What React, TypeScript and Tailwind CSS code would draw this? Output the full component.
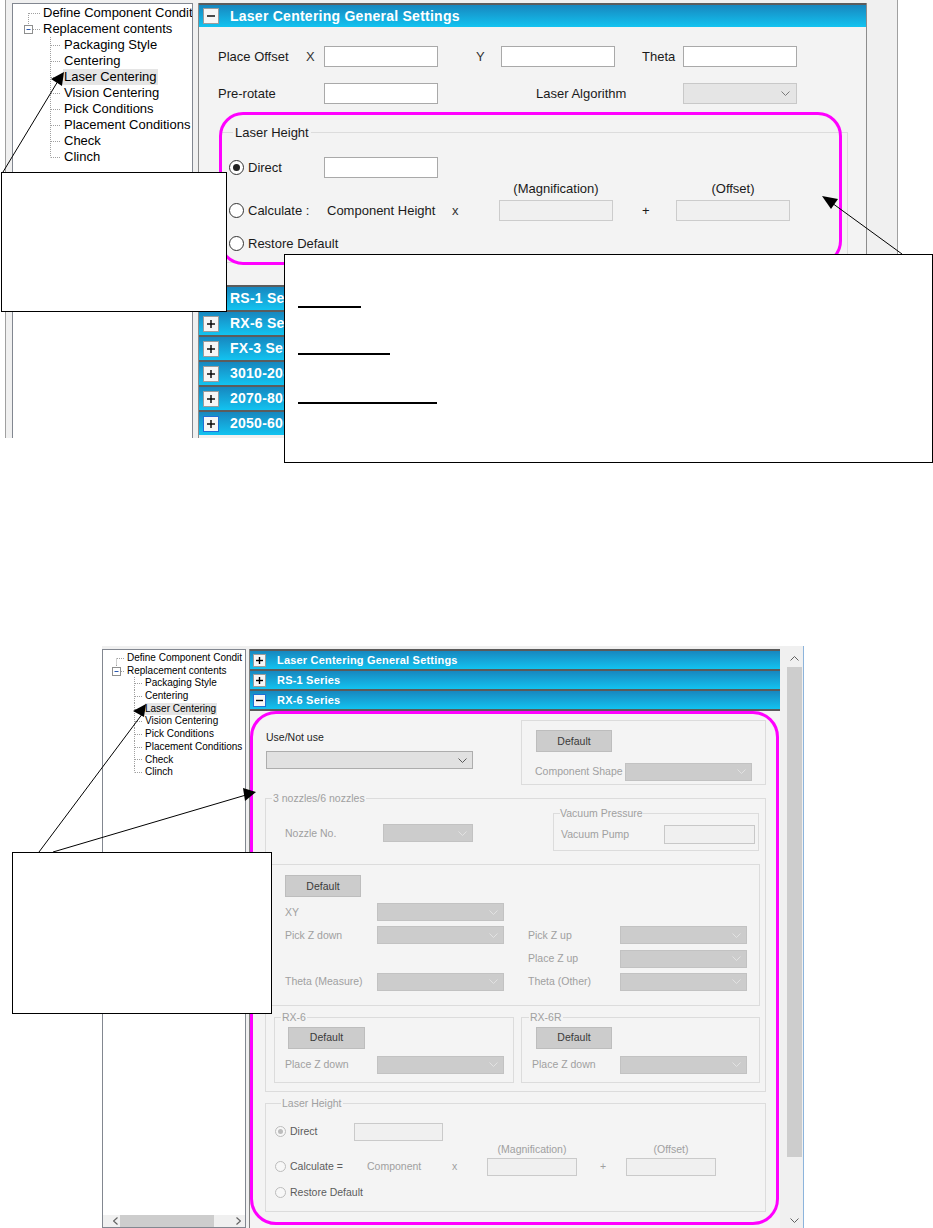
import React from "react";

const topKids = [
  "Packaging Style",
  "Centering",
  "Laser Centering",
  "Vision Centering",
  "Pick Conditions",
  "Placement Conditions",
  "Check",
  "Clinch",
];

const topBars = [
  "RS-1 Series",
  "RX-6 Series",
  "FX-3 Series",
  "3010-2080 Series",
  "2070-8080 Series",
  "2050-6060 Series",
];

function Chevron({ color = "#8a8a8a", up = false }: { color?: string; up?: boolean }) {
  return (
    <svg width="9" height="5" viewBox="0 0 9 5" className="shrink-0">
      <polyline
        points={up ? "0.5,4.5 4.5,0.5 8.5,4.5" : "0.5,0.5 4.5,4.5 8.5,0.5"}
        fill="none"
        stroke={color}
        strokeWidth="1"
      />
    </svg>
  );
}

function ToggleBox({ big, sign, focus }: { big?: boolean; sign: "+" | "-"; focus?: boolean }) {
  const s = big ? 8 : 7;
  return (
    <div
      className={`${big ? "w-[16px] h-[16px]" : "w-[13px] h-[13px]"} ${
        focus ? "border-[#1f6fd6]" : "border-[#9c9c9c]"
      } shrink-0 border bg-[#f6f6f6] flex items-center justify-center`}
    >
      <svg width={s} height={s} viewBox={`0 0 ${s} ${s}`}>
        <line x1="0" y1={s / 2} x2={s} y2={s / 2} stroke="#000" strokeWidth="1.4" />
        {sign === "+" && <line x1={s / 2} y1="0" x2={s / 2} y2={s} stroke="#000" strokeWidth="1.4" />}
      </svg>
    </div>
  );
}

/* ---------- top screenshot ---------- */

function TopTree() {
  return (
    <div className="ml-[6px] w-[181px] h-full shrink-0 border-t border-l border-r border-[#828790] bg-white pt-[1px] overflow-hidden text-[13px] leading-[16px] text-black">
      <div className="flex h-[16px] items-center whitespace-nowrap">
        <svg width="29" height="16" className="shrink-0">
          <line x1="15.5" y1="8" x2="15.5" y2="16" stroke="#a0a0a0" strokeDasharray="1 1" />
          <line x1="16" y1="8.5" x2="28" y2="8.5" stroke="#a0a0a0" strokeDasharray="1 1" />
        </svg>
        <span className="px-[1px]">Define Component Condit</span>
      </div>
      <div className="flex h-[16px] items-center whitespace-nowrap">
        <svg width="29" height="16" className="shrink-0">
          <line x1="15.5" y1="0" x2="15.5" y2="4" stroke="#a0a0a0" strokeDasharray="1 1" />
          <rect x="11.5" y="4.5" width="8" height="8" fill="#fff" stroke="#8e8f8f" />
          <line x1="13.5" y1="8.5" x2="17.5" y2="8.5" stroke="#2a58b0" />
          <line x1="20" y1="8.5" x2="28" y2="8.5" stroke="#a0a0a0" strokeDasharray="1 1" />
        </svg>
        <span className="px-[1px]">Replacement contents</span>
      </div>
      {topKids.map((k, i) => (
        <div key={k} className="flex h-[16px] items-center whitespace-nowrap">
          <svg width="50" height="16" className="shrink-0">
            <line
              x1="37.5"
              y1="0"
              x2="37.5"
              y2={i === topKids.length - 1 ? 8.5 : 16}
              stroke="#a0a0a0"
              strokeDasharray="1 1"
            />
            <line x1="38" y1="8.5" x2="48" y2="8.5" stroke="#a0a0a0" strokeDasharray="1 1" />
          </svg>
          <span className={`px-[1px] ${k === "Laser Centering" ? "bg-[#e5e5e5]" : ""}`}>{k}</span>
        </div>
      ))}
    </div>
  );
}

function TopBar({ label, open, focus }: { label: string; open?: boolean; focus?: boolean }) {
  return (
    <div className="h-[25px] shrink-0 border-t-2 border-[#5c5c5c] bg-linear-to-b from-[#1787bf] to-[#12c3f0] flex items-center pl-[4px]">
      <ToggleBox big sign={open ? "-" : "+"} focus={focus} />
      <span className="ml-[11px] text-white font-bold text-[14px] tracking-[0.25px] whitespace-nowrap">{label}</span>
    </div>
  );
}

function TopInput({ disabled }: { disabled?: boolean }) {
  return (
    <div
      className={`h-[21px] w-[114px] shrink-0 border ${
        disabled ? "bg-[#f0f0f0] border-[#cccccc]" : "bg-white border-[#a9a9a9]"
      }`}
    />
  );
}

function TopRadio({ on }: { on?: boolean }) {
  return (
    <div className="w-[15px] h-[15px] shrink-0 rounded-full border border-[#333333] bg-white flex items-center justify-center">
      {on && <div className="w-[7px] h-[7px] rounded-full bg-[#222222]" />}
    </div>
  );
}

function TopPanel() {
  return (
    <div className="ml-[5px] w-[669px] h-full shrink-0 flex flex-col border-l border-r border-[#8c8c8c]">
      <div className="h-[24px] shrink-0 border-t-2 border-[#5c5c5c] bg-linear-to-b from-[#1787bf] to-[#12c3f0] flex items-center pl-[4px]">
        <ToggleBox big sign="-" />
        <span className="ml-[11px] text-white font-bold text-[14px] tracking-[0.25px] whitespace-nowrap">
          Laser Centering General Settings
        </span>
      </div>

      <div className="h-[258px] shrink-0 bg-[#f3f3f3] pt-[19px] pl-[19px] text-[13px] leading-[15px] text-[#1a1a1a]">
        <div className="flex items-center h-[21px] whitespace-nowrap">
          <span className="w-[88px] shrink-0">Place Offset</span>
          <span className="w-[18px] shrink-0 text-[#333]">X</span>
          <TopInput />
          <span className="w-[38px] shrink-0" />
          <span className="w-[25px] shrink-0 text-[#333]">Y</span>
          <TopInput />
          <span className="w-[27px] shrink-0" />
          <span className="w-[41px] shrink-0">Theta</span>
          <TopInput />
        </div>
        <div className="mt-[16px] flex items-center h-[21px] whitespace-nowrap">
          <span className="w-[106px] shrink-0">Pre-rotate</span>
          <TopInput />
          <span className="w-[98px] shrink-0" />
          <span className="w-[147px] shrink-0">Laser Algorithm</span>
          <div className="h-[21px] w-[114px] shrink-0 border border-[#c8c8c8] bg-[#e5e5e5] flex items-center justify-end pr-[6px]">
            <Chevron color="#7a7a7a" />
          </div>
        </div>

        <fieldset className="mt-[21px] ml-[2px] w-[628px] border border-[#dcdcdc] pt-[17px] pb-[8px] pl-[8px]">
          <legend className="ml-[4px] px-[2px] leading-[15px]">Laser Height</legend>
          <div className="flex items-center h-[21px] whitespace-nowrap">
            <TopRadio on />
            <span className="ml-[4px] w-[76px] shrink-0">Direct</span>
            <TopInput />
          </div>
          <div className="mt-[4px] flex h-[14px] leading-[14px] whitespace-nowrap text-[#1a1a1a]">
            <span className="w-[270px] shrink-0" />
            <span className="w-[114px] shrink-0 text-center">(Magnification)</span>
            <span className="w-[63px] shrink-0" />
            <span className="w-[114px] shrink-0 text-center">(Offset)</span>
          </div>
          <div className="mt-[4px] flex items-center h-[21px] whitespace-nowrap">
            <TopRadio />
            <span className="ml-[4px] w-[79px] shrink-0">Calculate :</span>
            <span className="w-[125px] shrink-0">Component Height</span>
            <span className="w-[47px] shrink-0 text-[#333]">x</span>
            <TopInput disabled />
            <span className="w-[29px] shrink-0" />
            <span className="w-[34px] shrink-0">+</span>
            <TopInput disabled />
          </div>
          <div className="mt-[12px] flex items-center h-[21px] whitespace-nowrap">
            <TopRadio />
            <span className="ml-[4px]">Restore Default</span>
          </div>
        </fieldset>
      </div>

      {topBars.map((b, i) => (
        <TopBar key={b} label={b} focus={i === topBars.length - 1} />
      ))}
    </div>
  );
}

/* ---------- bottom screenshot ---------- */

function BottomTree() {
  return (
    <div className="w-[144px] h-full shrink-0 border border-[#828790] bg-white flex flex-col overflow-hidden">
      <div className="flex-1 pt-[2px] text-[10px] leading-[12.7px] text-black overflow-hidden">
        <div className="flex h-[12.7px] items-center whitespace-nowrap">
          <svg width="24" height="13" className="shrink-0">
            <line x1="13.5" y1="6.5" x2="13.5" y2="13" stroke="#a0a0a0" strokeDasharray="1 1" />
            <line x1="14" y1="6.5" x2="22" y2="6.5" stroke="#a0a0a0" strokeDasharray="1 1" />
          </svg>
          <span>Define Component Condit</span>
        </div>
        <div className="flex h-[12.7px] items-center whitespace-nowrap">
          <svg width="24" height="13" className="shrink-0">
            <line x1="13.5" y1="0" x2="13.5" y2="2.5" stroke="#a0a0a0" strokeDasharray="1 1" />
            <rect x="9.5" y="2.5" width="8" height="8" fill="#fff" stroke="#8e8f8f" />
            <line x1="11.5" y1="6.5" x2="15.5" y2="6.5" stroke="#2a58b0" />
            <line x1="18" y1="6.5" x2="22" y2="6.5" stroke="#a0a0a0" strokeDasharray="1 1" />
          </svg>
          <span>Replacement contents</span>
        </div>
        {topKids.map((k, i) => (
          <div key={k} className="flex h-[12.7px] items-center whitespace-nowrap">
            <svg width="42" height="13" className="shrink-0">
              <line
                x1="31.5"
                y1="0"
                x2="31.5"
                y2={i === topKids.length - 1 ? 6.5 : 13}
                stroke="#a0a0a0"
                strokeDasharray="1 1"
              />
              <line x1="32" y1="6.5" x2="40" y2="6.5" stroke="#a0a0a0" strokeDasharray="1 1" />
            </svg>
            <span className={k === "Laser Centering" ? "bg-[#e5e5e5] pr-[1px]" : ""}>{k}</span>
          </div>
        ))}
      </div>
      <div className="h-[12px] shrink-0 bg-[#f0f0f0] flex items-center">
        <span className="ml-[7px] w-[10px] flex justify-center">
          <svg width="5" height="8" viewBox="0 0 5 8">
            <polyline points="4.5,0.5 0.5,4 4.5,7.5" fill="none" stroke="#606060" strokeWidth="1.2" />
          </svg>
        </span>
        <div className="h-full w-[94px] bg-[#cdcdcd]" />
        <span className="ml-[20px] w-[8px] flex justify-center">
          <svg width="5" height="8" viewBox="0 0 5 8">
            <polyline points="0.5,0.5 4.5,4 0.5,7.5" fill="none" stroke="#606060" strokeWidth="1.2" />
          </svg>
        </span>
      </div>
    </div>
  );
}

function BottomBar({ label, open }: { label: string; open?: boolean }) {
  return (
    <div className="h-[20px] shrink-0 border-t-2 border-[#5a5a5a] bg-linear-to-b from-[#1787bf] to-[#12c3f0] flex items-center pl-[3px]">
      <ToggleBox sign={open ? "-" : "+"} focus={open} />
      <span className="ml-[11px] text-white font-bold text-[11px] tracking-[0.2px] whitespace-nowrap">{label}</span>
    </div>
  );
}

function GraySelect({ w }: { w: string }) {
  return (
    <div className={`${w} h-[18px] shrink-0 border border-[#c2c2c2] bg-[#cccccc] flex items-center justify-end pr-[5px]`}>
      <Chevron color="#e2e2e2" />
    </div>
  );
}

function DefaultBtn({ w }: { w: string }) {
  return (
    <div
      className={`${w} h-[22px] shrink-0 border border-[#bdbdbd] bg-[#cccccc] flex items-center justify-center text-[10.5px] text-[#3a3a3a]`}
    >
      Default
    </div>
  );
}

function SmallRadio({ on }: { on?: boolean }) {
  return (
    <div className="w-[11px] h-[11px] shrink-0 rounded-full border border-[#bcbcbc] bg-[#f7f7f7] flex items-center justify-center">
      {on && <div className="w-[5px] h-[5px] rounded-full bg-[#bcbcbc]" />}
    </div>
  );
}

function FlatBox({ w }: { w: string }) {
  return <div className={`${w} h-[18px] shrink-0 border border-[#cacaca] bg-[#f0f0f0]`} />;
}

function BottomPanel() {
  return (
    <div className="ml-[3px] w-[531px] h-full shrink-0 flex flex-col border-l border-[#7f7f7f]">
      <BottomBar label="Laser Centering General Settings" />
      <BottomBar label="RS-1 Series" />
      <BottomBar label="RX-6 Series" open />
      <div className="h-[2px] shrink-0 bg-[#5a5a5a]" />

      <div className="flex-1 bg-[#f4f4f4] text-[10.5px] leading-[13px] text-[#a0a0a0] overflow-hidden">
        {/* use / not use + component shape */}
        <div className="flex h-[74px]">
          <div className="w-[271px] shrink-0 pl-[16px] pt-[20px]">
            <div className="h-[13px] text-[#1e1e1e]">Use/Not use</div>
            <div className="mt-[7px] w-[207px] h-[18px] border border-[#adadad] bg-[#e1e1e1] flex items-center justify-end pr-[5px]">
              <Chevron color="#5a5a5a" />
            </div>
          </div>
          <div className="mt-[9px] w-[245px] h-[65px] shrink-0 border border-[#dcdcdc]">
            <div className="ml-[14px] mt-[9px]">
              <DefaultBtn w="w-[76px]" />
            </div>
            <div className="mt-[10px] flex items-center h-[19px] whitespace-nowrap">
              <span className="pl-[13px] w-[103px] shrink-0">Component Shape</span>
              <GraySelect w="w-[127px]" />
            </div>
          </div>
        </div>

        {/* 3 nozzles / 6 nozzles */}
        <fieldset className="mt-[7px] ml-[15px] w-[501px] border border-[#dcdcdc] pb-[8px]">
          <legend className="ml-[6px] px-[1px] leading-[13px]">3 nozzles/6 nozzles</legend>
          <div className="flex items-start">
            <div className="w-[287px] shrink-0 pt-[19px] flex items-center whitespace-nowrap">
              <span className="pl-[19px] w-[117px] shrink-0">Nozzle No.</span>
              <GraySelect w="w-[90px]" />
            </div>
            <fieldset className="mt-[2px] w-[206px] shrink-0 border border-[#dcdcdc] pt-[5px] pb-[6px]">
              <legend className="ml-[6px] leading-[13px]">Vacuum Pressure</legend>
              <div className="flex items-center whitespace-nowrap">
                <span className="pl-[7px] w-[110px] shrink-0">Vacuum Pump</span>
                <div className="w-[91px] h-[19px] border border-[#c8c8c8] bg-[#f0f0f0]" />
              </div>
            </fieldset>
          </div>

          <div className="-ml-px mt-[13px] w-[495px] border border-[#dcdcdc] pt-[10px] pb-[14px] pl-[19px]">
            <DefaultBtn w="w-[76px]" />
            <div className="mt-[6px] grid grid-cols-[92px_127px_24px_92px_127px] auto-rows-[18px] gap-y-[5.3px] items-center whitespace-nowrap">
              <span>XY</span>
              <GraySelect w="w-[127px]" />
              <span />
              <span />
              <span />
              <span>Pick Z down</span>
              <GraySelect w="w-[127px]" />
              <span />
              <span>Pick Z up</span>
              <GraySelect w="w-[127px]" />
              <span />
              <span />
              <span />
              <span>Place Z up</span>
              <GraySelect w="w-[127px]" />
              <span>Theta (Measure)</span>
              <GraySelect w="w-[127px]" />
              <span />
              <span>Theta (Other)</span>
              <GraySelect w="w-[127px]" />
            </div>
          </div>

          <div className="mt-[5px] flex">
            <fieldset className="ml-[8px] w-[240px] shrink-0 border border-[#dcdcdc] pt-[3px] pb-[8px]">
              <legend className="ml-[6px] px-[1px] leading-[13px]">RX-6</legend>
              <div className="ml-[13px]">
                <DefaultBtn w="w-[77px]" />
              </div>
              <div className="mt-[7px] flex items-center h-[18px] whitespace-nowrap">
                <span className="pl-[10px] w-[102px] shrink-0">Place Z down</span>
                <GraySelect w="w-[127px]" />
              </div>
            </fieldset>
            <fieldset className="ml-[7px] w-[239px] shrink-0 border border-[#dcdcdc] pt-[3px] pb-[8px]">
              <legend className="ml-[7px] px-[1px] leading-[13px]">RX-6R</legend>
              <div className="ml-[14px]">
                <DefaultBtn w="w-[76px]" />
              </div>
              <div className="mt-[7px] flex items-center h-[18px] whitespace-nowrap">
                <span className="pl-[10px] w-[98px] shrink-0">Place Z down</span>
                <GraySelect w="w-[127px]" />
              </div>
            </fieldset>
          </div>
        </fieldset>

        {/* laser height */}
        <fieldset className="mt-[5px] ml-[15px] w-[501px] border border-[#dcdcdc] pt-[13px] pb-[9px] pl-[9px]">
          <legend className="ml-[6px] px-[1px] leading-[13px]">Laser Height</legend>
          <div className="flex items-center h-[18px] whitespace-nowrap">
            <SmallRadio on />
            <span className="ml-[4px] w-[64px] shrink-0 text-[#5c5c5c]">Direct</span>
            <FlatBox w="w-[89px]" />
          </div>
          <div className="mt-[2px] flex h-[12px] leading-[12px] whitespace-nowrap">
            <span className="w-[212px] shrink-0" />
            <span className="w-[90px] shrink-0 text-center">(Magnification)</span>
            <span className="w-[49px] shrink-0" />
            <span className="w-[90px] shrink-0 text-center">(Offset)</span>
          </div>
          <div className="mt-[3px] flex items-center h-[18px] whitespace-nowrap">
            <SmallRadio />
            <span className="ml-[4px] w-[77px] shrink-0 text-[#5c5c5c]">Calculate =</span>
            <span className="w-[85px] shrink-0">Component</span>
            <span className="w-[35px] shrink-0">x</span>
            <FlatBox w="w-[90px]" />
            <span className="w-[23px] shrink-0" />
            <span className="w-[26px] shrink-0">+</span>
            <FlatBox w="w-[90px]" />
          </div>
          <div className="mt-[8px] flex items-center h-[18px] whitespace-nowrap">
            <SmallRadio />
            <span className="ml-[4px] text-[#5c5c5c]">Restore Default</span>
          </div>
        </fieldset>
      </div>
    </div>
  );
}

function VScroll() {
  return (
    <div className="ml-[7px] w-[15px] h-full shrink-0 bg-[#f0f0f0] flex flex-col">
      <div className="h-[18px] shrink-0 flex items-center justify-center">
        <Chevron color="#606060" up />
      </div>
      <div className="h-[490px] shrink-0 bg-[#cdcdcd]" />
      <div className="flex-1" />
      <div className="h-[16px] shrink-0 flex items-center justify-center">
        <Chevron color="#606060" />
      </div>
    </div>
  );
}

/* ---------- annotations ---------- */

function Arrows() {
  return (
    <svg
      width="933"
      height="1228"
      viewBox="0 0 933 1228"
      className="absolute left-0 top-0 pointer-events-none"
    >
      <g stroke="#000" strokeWidth="1" fill="none">
        <line x1="3" y1="172" x2="58" y2="81" />
        <line x1="902" y1="254" x2="832" y2="203" />
        <line x1="39" y1="852" x2="143" y2="713" />
        <line x1="53" y1="852" x2="246" y2="795" />
      </g>
      <g fill="#000">
        <polygon points="51,79 64,72 62,86" />
        <polygon points="822,196 838,199 831,209" />
        <polygon points="133,711 146,704 144,717" />
        <polygon points="256,792 243,788 245,801" />
      </g>
    </svg>
  );
}

export default function App() {
  return (
    <div className="relative w-[933px] h-[1228px] overflow-hidden bg-white font-['Liberation_Sans',Arial,sans-serif]">
      {/* upper capture */}
      <div className="ml-[5px] w-[893px] h-[438px] flex bg-[#f0f0f0] border-l border-r border-[#a0a0a0] pt-[3px]">
        <TopTree />
        <TopPanel />
      </div>

      {/* lower capture */}
      <div className="mt-[208px] ml-[102px] w-[702px] h-[582px] flex bg-[#f0f0f0] border-r border-[#8cb4dc] pt-[3px]">
        <BottomTree />
        <BottomPanel />
        <VScroll />
      </div>

      {/* highlight frames */}
      <div className="absolute left-[219px] top-[112px] w-[623px] h-[153px] rounded-[24px] border-[3px] border-[#ff00ff]" />
      <div className="absolute left-[250px] top-[711px] w-[529px] h-[514px] rounded-[26px] border-[3px] border-[#ff00ff]" />

      {/* callouts */}
      <div className="absolute left-[1px] top-[172px] w-[226px] h-[140px] border border-black bg-white" />
      <div className="absolute left-[284px] top-[254px] w-[649px] h-[209px] border border-black bg-white pl-[13px] pt-[51px]">
        <div className="w-[63px] border-b-2 border-black" />
        <div className="mt-[45px] w-[92px] border-b-2 border-black" />
        <div className="mt-[47px] w-[139px] border-b-2 border-black" />
      </div>
      <div className="absolute left-[12px] top-[852px] w-[260px] h-[162px] border border-black bg-white" />

      <Arrows />
    </div>
  );
}
